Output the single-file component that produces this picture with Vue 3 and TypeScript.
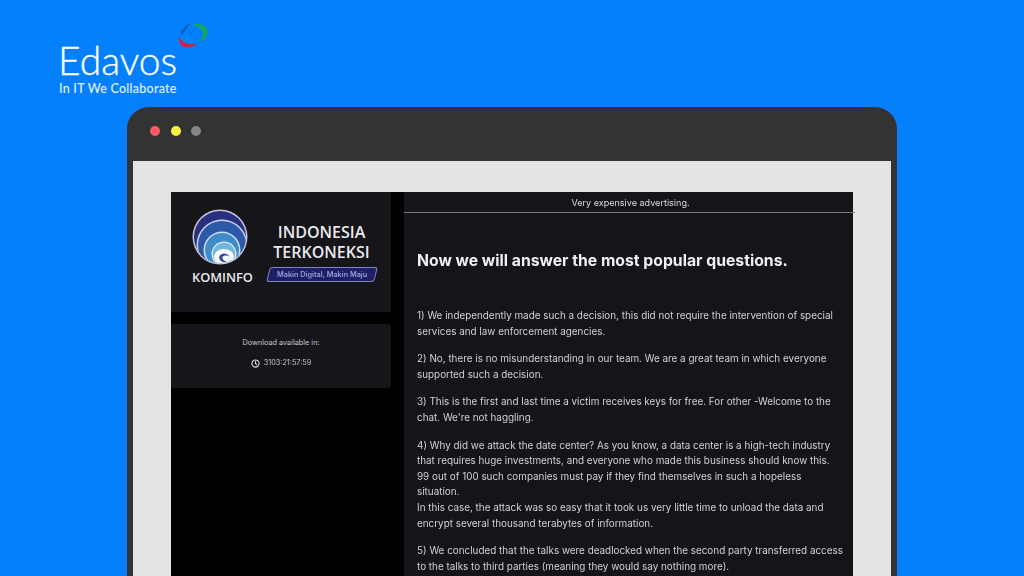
<template>
  <div class="page">
    <header class="brand">
      <div class="brand__text">
        <div class="brand__name">Edavos</div>
        <div class="brand__tag">In IT We Collaborate</div>
      </div>
      <svg class="brand__mark" viewBox="0 0 30 26" fill="none" xmlns="http://www.w3.org/2000/svg">
        <path d="M1 15C0.500 21 3.500 25.500 9 25.500C13 25.500 16.500 24 19 21.500C15.500 22.500 11 22.500 7.500 21C4.500 19.500 2.500 17.500 1 15Z" fill="#d3203f" />
        <path d="M15 2.500C22 1 29.500 4 29.500 10C29.500 14.500 26 18.500 21 20.500C23.500 17.500 25.500 14.500 25 11C24.500 7.500 20.500 4 15 2.500Z" fill="#17a653" />
        <path d="M2.500 13C3 8 7.500 2.500 14 0.500C10.500 3.500 8.500 6 7.500 8.500C6.500 10.500 5 12 2.500 13Z" fill="#0b62bd" />
        <path d="M19 8C15 8.500 12.500 11 12.500 14C11 11.500 14.500 7.500 19 8Z" fill="#0b62bd" />
      </svg>
    </header>

    <section class="window">
      <div class="window__bar">
        <span class="dot dot--red"></span>
        <span class="dot dot--yellow"></span>
        <span class="dot dot--gray"></span>
      </div>
      <div class="window__body">
        <div class="shot">
          <aside class="side">
            <div class="card card--logo">
              <div class="kominfo">
                <svg class="globe" viewBox="0 0 56 56" xmlns="http://www.w3.org/2000/svg">
                  <defs>
                    <clipPath id="globe-clip">
                      <circle cx="28" cy="28" r="26" />
                    </clipPath>
                  </defs>
                  <circle cx="28" cy="28" r="27.500" fill="#c4c6d4" />
                  <circle cx="28" cy="28" r="26" fill="#2a2f80" />
                  <g clip-path="url(#globe-clip)">
                    <circle cx="30" cy="36" r="25.500" fill="#cfd4e8" />
                    <circle cx="30" cy="36" r="24" fill="#2c5aa8" />
                    <circle cx="30" cy="41" r="18.500" fill="#cfe0f0" />
                    <circle cx="30" cy="41" r="17" fill="#3f8cc8" />
                    <circle cx="32" cy="45" r="12.500" fill="#e2eef8" />
                    <circle cx="32" cy="45" r="11.200" fill="#6db8de" />
                    <ellipse cx="32" cy="48" rx="10" ry="8" fill="#f6f8fc" />
                    <path d="M35 53C29.500 54 26 50.500 27.500 47C29.500 43.500 35 43.500 37.500 47.500C35 46 31.500 46 30.500 48C30 50 32 52 35 53Z" fill="#2f4f9c" />
                  </g>
                </svg>
                <span class="kominfo__name">KOMINFO</span>
              </div>
              <div class="slogan">
                <div class="slogan__title">INDONESIA<br />TERKONEKSI</div>
                <div class="slogan__badge"><span>Makin Digital, Makin Maju</span></div>
              </div>
            </div>
            <div class="card card--timer">
              <div class="timer__label">Download available in:</div>
              <div class="timer__value">
                <svg class="timer__icon" viewBox="0 0 24 24" fill="none" stroke="currentColor" stroke-width="3" stroke-linecap="round" xmlns="http://www.w3.org/2000/svg">
                  <circle cx="12" cy="12" r="9.500" />
                  <path d="M12 6.500V12L15.500 15.500" />
                </svg>
                <span>{{ countdown }}</span>
              </div>
            </div>
          </aside>

          <main class="post">
            <div class="post__top">Very expensive advertising.</div>
            <h1 class="post__title">Now we will answer the most popular questions.</h1>
            <div class="post__text">
              <p v-for="(item, i) in answers" :key="i">
                <template v-for="(line, j) in item" :key="j"><br v-if="j > 0" />{{ line }}</template>
              </p>
            </div>
          </main>
        </div>
      </div>
    </section>
  </div>
</template>

<script setup lang="ts">
const countdown = '3103:21:57:59'

const answers: string[][] = [
  [
    '1) We independently made such a decision, this did not require the intervention of special',
    'services and law enforcement agencies.'
  ],
  [
    '2) No, there is no misunderstanding in our team. We are a great team in which everyone',
    'supported such a decision.'
  ],
  [
    '3) This is the first and last time a victim receives keys for free. For other -Welcome to the',
    "chat. We're not haggling."
  ],
  [
    '4) Why did we attack the date center? As you know, a data center is a high-tech industry',
    'that requires huge investments, and everyone who made this business should know this.',
    '99 out of 100 such companies must pay if they find themselves in such a hopeless',
    'situation.',
    'In this case, the attack was so easy that it took us very little time to unload the data and',
    'encrypt several thousand terabytes of information.'
  ],
  [
    '5) We concluded that the talks were deadlocked when the second party transferred access',
    'to the talks to third parties (meaning they would say nothing more).'
  ]
]
</script>

<style>
html,
body {
  margin: 0;
  background: #0580fd;
}
</style>

<style scoped>
.page {
  width: 1024px;
  height: 576px;
  overflow: hidden;
  background: #0580fd;
  font-family: Inter, "Liberation Sans", sans-serif;
}

.brand {
  display: flex;
  align-items: flex-start;
  height: 107px;
  padding-left: 58px;
  box-sizing: border-box;
}

.brand__text {
  width: 120px;
  padding-top: 38px;
  color: #fff;
}

.brand__name {
  font-family: Lato, sans-serif;
  font-size: 39px;
  font-weight: 300;
  line-height: 44px;
  -webkit-text-stroke: 0.3px #fff;
}

.brand__tag {
  padding-left: 1px;
  font-family: Lato, sans-serif;
  font-size: 12.500px;
  font-weight: 500;
  line-height: 14px;
  letter-spacing: 0.25px;
  color: #e6f1ff;
  white-space: nowrap;
}

.brand__mark {
  width: 30px;
  height: 26px;
  margin: 22px 0 0 0;
}

.window {
  display: flex;
  flex-direction: column;
  width: 770px;
  height: 469px;
  margin-left: 127px;
  padding: 0 6px;
  box-sizing: border-box;
  background: #333333;
  border-radius: 22px 22px 0 0;
}

.window__bar {
  display: flex;
  align-items: center;
  gap: 10.500px;
  height: 54px;
  flex-shrink: 0;
  padding: 0 0 6px 17px;
  box-sizing: border-box;
}

.dot {
  width: 10px;
  height: 10px;
  border-radius: 50%;
}

.dot--red {
  background: #fb5a62;
}

.dot--yellow {
  background: #fdf343;
}

.dot--gray {
  background: #858585;
}

.window__body {
  flex: 1;
  min-height: 0;
  padding: 31px 38px 0;
  background: #e4e4e4;
}

.shot {
  display: flex;
  height: 100%;
  background: #000;
  filter: blur(0.35px);
}

.side {
  width: 220px;
  flex-shrink: 0;
  display: flex;
  flex-direction: column;
  gap: 12px;
}

.card {
  background: #15151a;
  box-sizing: border-box;
}

.card--logo {
  height: 120px;
  display: flex;
  gap: 13px;
  padding: 17px 0 0 21px;
}

.kominfo {
  display: flex;
  flex-direction: column;
  align-items: flex-start;
  width: 61px;
}

.globe {
  width: 56px;
  height: 56px;
}

.kominfo__name {
  margin-top: 4px;
  font-family: "Open Sans", sans-serif;
  font-size: 12.800px;
  font-weight: 600;
  line-height: 16px;
  color: #e9e9ee;
}

.slogan {
  display: flex;
  flex-direction: column;
  align-items: center;
  width: 111px;
  padding-top: 13px;
}

.slogan__title {
  font-family: "Open Sans", sans-serif;
  font-size: 16px;
  font-weight: 600;
  line-height: 20px;
  text-align: center;
  color: #e9e9ee;
  white-space: nowrap;
}

.slogan__badge {
  width: 106px;
  height: 13px;
  margin-top: 5px;
  display: flex;
  align-items: center;
  justify-content: center;
  background: #1f1f68;
  border: 1px solid #8084c0;
  border-radius: 3px;
  transform: skewX(-14deg);
}

.slogan__badge span {
  display: block;
  font-size: 7.300px;
  font-weight: 600;
  color: #9a9cd8;
  white-space: nowrap;
  transform: skewX(14deg);
}

.card--timer {
  height: 64px;
  display: flex;
  flex-direction: column;
  align-items: center;
  padding-top: 13px;
  border-radius: 3px;
  color: #c9c9cd;
  font-size: 7.300px;
  line-height: 12px;
}

.timer__value {
  display: flex;
  align-items: center;
  gap: 4px;
  margin-top: 8px;
}

.timer__icon {
  width: 9px;
  height: 9px;
  color: #dcdcdf;
}

.post {
  flex: 1;
  min-width: 0;
  margin-left: 13px;
  background: #14141a;
  color: #d2d2d6;
}

.post__top {
  height: 19px;
  margin-right: -2px;
  padding: 1px 0 0 2px;
  font-size: 9.050px;
  line-height: 19px;
  text-align: center;
  color: #dcdce0;
  border-bottom: 1px solid #7a7a7c;
}

.post__title {
  margin: 0;
  padding: 38px 0 0 13px;
  font-size: 15.750px;
  font-weight: 700;
  line-height: 20px;
  color: #f1f1f3;
  white-space: nowrap;
}

.post__text {
  padding: 37px 0 0 13px;
  font-size: 9.900px;
  line-height: 15.600px;
  white-space: nowrap;
}

.post__text p {
  margin: 0 0 12px;
}
</style>
